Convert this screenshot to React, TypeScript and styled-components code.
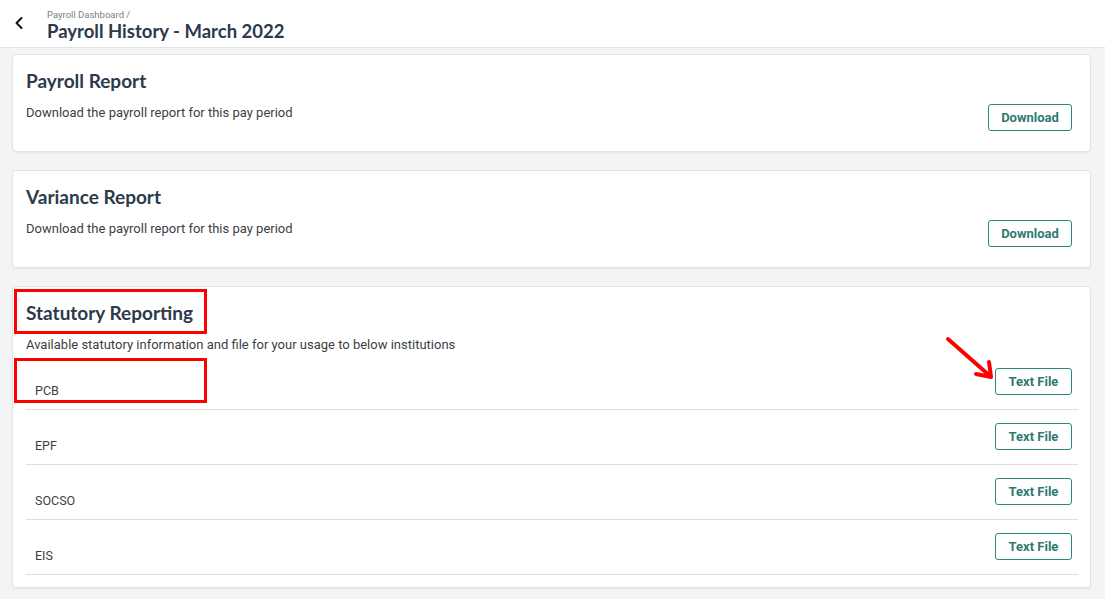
import React from "react";
import styled, { createGlobalStyle } from "styled-components";

const GlobalStyle = createGlobalStyle`
  html, body {
    margin: 0;
    padding: 0;
    background: #f3f4f6;
    font-family: Roboto, "Liberation Sans", sans-serif;
  }
`;

const Page = styled.div`
  min-height: 599px;
  background: #f3f4f6;
`;

const Header = styled.header`
  height: 47px;
  background: #fff;
  border-bottom: 1px solid #e2e4e8;
  display: flex;
  align-items: center;
  padding-left: 10px;
  gap: 19px;
`;

const BackButton = styled.button`
  border: none;
  background: none;
  padding: 0;
  width: 18px;
  height: 18px;
  display: flex;
  align-items: center;
  justify-content: center;
  margin-top: -2px;
  cursor: pointer;
`;

const HeaderText = styled.div`
  display: flex;
  flex-direction: column;
  margin-top: 4px;
`;

const Crumb = styled.span`
  font-size: 9.5px;
  line-height: 11px;
  color: #7a7f87;
`;

const PageTitle = styled.h1`
  margin: 0;
  font-family: Lato, sans-serif;
  font-weight: 700;
  font-size: 18.5px;
  line-height: 22px;
  color: #2c3a4b;
`;

const Content = styled.main`
  padding: 6px 14px 10px 12px;
  display: flex;
  flex-direction: column;
  gap: 18px;
`;

const Card = styled.section`
  position: relative;
  background: #fff;
  border: 1px solid #e1e3e6;
  border-radius: 4px;
  box-shadow: 0 1px 2px rgba(0, 0, 0, 0.06);
  padding: 14px 18px 20px 13px;
`;

const CardTitle = styled.h2`
  margin: 0 0 11px;
  font-family: Lato, sans-serif;
  font-weight: 700;
  font-size: 19px;
  line-height: 24px;
  color: #2c3a4b;
`;

const CardRow = styled.div`
  display: flex;
  justify-content: space-between;
  align-items: flex-start;
`;

const Description = styled.p`
  margin: 0;
  padding-top: 1px;
  font-size: 13px;
  line-height: 16px;
  color: #3b3f45;
`;

const OutlineButton = styled.button<{ $width: number }>`
  width: ${(p) => p.$width}px;
  height: 27px;
  background: #fff;
  border: 1px solid #2b8a7e;
  border-radius: 3px;
  color: #2f7a70;
  font-family: Roboto, sans-serif;
  font-weight: 700;
  font-size: 13px;
  padding: 0;
  cursor: pointer;
`;

const StatCard = styled(Card)`
  padding: 14px 12px 12px 13px;
`;

const InstitutionList = styled.ul`
  list-style: none;
  margin: 2px 0 0;
  padding: 0;
`;

const InstitutionRow = styled.li`
  height: 54px;
  border-bottom: 1px solid #dcdde0;
  display: flex;
  justify-content: space-between;
  align-items: flex-start;
  padding: 0 6px 0 9px;
`;

const InstitutionName = styled.span`
  padding-top: 28px;
  font-size: 12.5px;
  line-height: 16px;
  color: #3b3f45;
`;

const RowButton = styled(OutlineButton)`
  margin-top: 13px;
`;

const Highlight = styled.div<{ $top: number }>`
  position: absolute;
  left: 1px;
  top: ${(p) => p.$top}px;
  width: 193px;
  height: 45px;
  box-sizing: border-box;
  border: 3px solid #ff0000;
  pointer-events: none;
`;

const Arrow = styled.svg`
  position: absolute;
  left: 930px;
  top: 47px;
  pointer-events: none;
`;

const reports = [
  { title: "Payroll Report", desc: "Download the payroll report for this pay period" },
  { title: "Variance Report", desc: "Download the payroll report for this pay period" },
];

const institutions = ["PCB", "EPF", "SOCSO", "EIS"];

export default function App() {
  return (
    <Page>
      <GlobalStyle />
      <Header>
        <BackButton aria-label="Back">
          <svg width="14" height="14" viewBox="0 0 14 14" fill="none">
            <path d="M9.5 2 L4.5 7 L9.5 12" stroke="#111" strokeWidth="2" strokeLinecap="round" strokeLinejoin="round" />
          </svg>
        </BackButton>
        <HeaderText>
          <Crumb>Payroll Dashboard /</Crumb>
          <PageTitle>Payroll History - March 2022</PageTitle>
        </HeaderText>
      </Header>
      <Content>
        {reports.map((r) => (
          <Card key={r.title}>
            <CardTitle>{r.title}</CardTitle>
            <CardRow>
              <Description>{r.desc}</Description>
              <OutlineButton $width={84}>Download</OutlineButton>
            </CardRow>
          </Card>
        ))}
        <StatCard>
          <CardTitle>Statutory Reporting</CardTitle>
          <Description>Available statutory information and file for your usage to below institutions</Description>
          <InstitutionList>
            {institutions.map((name) => (
              <InstitutionRow key={name}>
                <InstitutionName>{name}</InstitutionName>
                <RowButton $width={77}>Text File</RowButton>
              </InstitutionRow>
            ))}
          </InstitutionList>
          <Highlight $top={2} />
          <Highlight $top={71} />
          <Arrow width="60" height="50" viewBox="0 0 60 50">
            <line x1="5" y1="5" x2="47" y2="42" stroke="#ff0000" strokeWidth="4" strokeLinecap="round" />
            <path d="M33 40 L48 43 L46 28" fill="none" stroke="#ff0000" strokeWidth="4" strokeLinecap="round" strokeLinejoin="round" />
          </Arrow>
        </StatCard>
      </Content>
    </Page>
  );
}
